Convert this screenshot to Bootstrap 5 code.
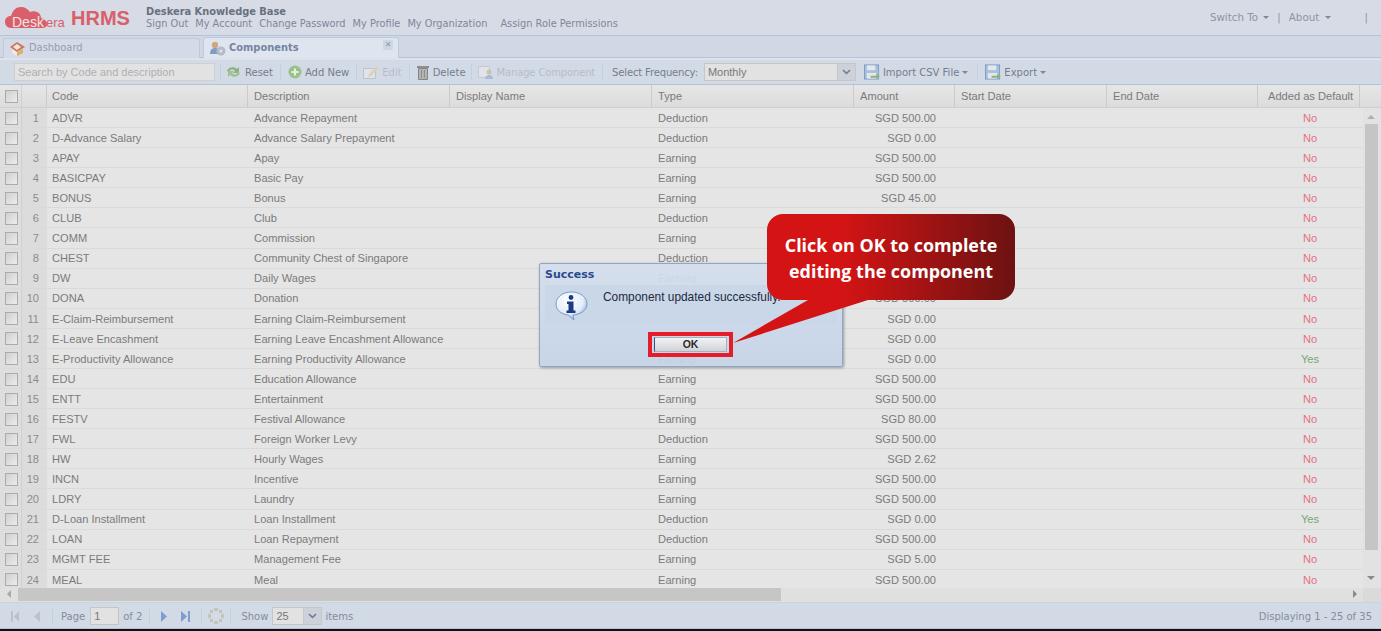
<!DOCTYPE html>
<html lang="en">

<head>
    <meta charset="UTF-8">
    <meta name="viewport" content="width=device-width, initial-scale=1.0">
    <title>Deskera HRMS - Components</title>
    <link href="https://cdn.jsdelivr.net/npm/bootstrap@5.3.0/dist/css/bootstrap.min.css" rel="stylesheet">
    <style>
        body {
            width: 1381px;
            height: 631px;
            overflow: hidden;
            background-color: #d5dbe5;
            font-family: "DejaVu Sans", sans-serif;
            font-size: 10px;
            color: #7d8598;
        }

        .app-shell {
            height: 629px;
        }

        .app-shell > * {
            flex-shrink: 0;
        }

        /* header */
        .top-head {
            height: 35px;
            padding-left: 5px;
            background-color: #d6dbe5;
        }

        .logo-box {
            width: 141px;
        }

        .logo-text {
            font-family: "Liberation Sans", sans-serif;
            font-weight: 700;
            font-size: 20px;
            color: #d9606a;
            margin-left: 2px;
        }

        .head-title {
            font-weight: 700;
            font-size: 9.85px;
            color: #69707f;
            line-height: 11px;
            margin-top: 6px;
        }

        .head-links {
            line-height: 13px;
            color: #808799;
            font-size: 9.8px;
            gap: 7px;
        }

        .head-gap {
            margin-left: 6px;
        }

        .right-links {
            color: #8d94a5;
            font-size: 10.3px;
            padding-right: 13px;
        }

        .right-end {
            margin-left: 26px;
        }

        .caret-gap {
            margin-left: 2px;
        }

        .tiny-caret {
            display: inline-block;
            border-left: 3px solid transparent;
            border-right: 3px solid transparent;
            border-top: 3px solid #7f8698;
            vertical-align: middle;
        }

        /* tabs */
        .tab-strip {
            height: 23px;
            padding: 2px 0 0 3px;
            gap: 3px;
            background-color: #d1d8e4;
            border-top: 1px solid #b3c3dc;
            border-bottom: 1px solid #b3c3dc;
        }

        .tab-item {
            width: 197px;
            height: 20px;
            padding: 0 5px;
            gap: 3px;
            border: 1px solid #bccae0;
            border-bottom: 0;
            border-radius: 3px 3px 0 0;
            background-color: #d4dbe7;
            font-size: 9.9px;
            color: #959db0;
        }

        .tab-item.tab-on {
            width: 196px;
            background-color: #dfe5ee;
            color: #7585a3;
            font-weight: 700;
            margin-top: -1px;
            height: 21px;
        }

        .tab-x {
            margin-left: auto;
            margin-top: -6px;
            width: 10px;
            height: 10px;
            border-radius: 2px;
            background-color: #cdd6e3;
            color: #8e98ab;
            font-size: 8px;
            line-height: 10px;
            text-align: center;
        }

        /* toolbar */
        .tool-bar {
            height: 27px;
            padding: 0 0 0 14px;
            background-color: #d2dae6;
            border-top: 2px solid #dde3ec;
            border-bottom: 1px solid #b3c3dc;
            color: #767d8c;
            font-size: 10px;
        }

        .tool-item {
            gap: 3px;
            white-space: nowrap;
        }

        .tool-off {
            color: #b6bdca;
        }

        .tight-text {
            letter-spacing: -0.15px;
            white-space: nowrap;
        }

        .tool-sep {
            width: 1px;
            height: 16px;
            background-color: #c2cfe1;
            margin: 0 7px;
        }

        .tool-sep.sep-first {
            margin: 0 4px 0 5px;
        }

        .tool-sep.sep-short {
            margin: 0 6px 0 7px;
        }

        .tool-sep.sep-mgr {
            margin: 0 6px 0 5px;
        }

        .tool-sep.sep-export {
            margin: 0 7px 0 9px;
        }

        .freq-label {
            margin-left: 2px;
        }

        .freq-combo {
            width: 152px;
            margin-left: 6px;
        }

        .import-item {
            margin-left: 8px;
        }

        .search-box {
            width: 201px;
            height: 18px;
            padding-left: 3px;
            background-color: #e2e2e2;
            border: 1px solid #cfcfcf;
            color: #adb0b6;
            font-family: "Liberation Sans", sans-serif;
            font-size: 11px;
            line-height: 16px;
        }

        .combo-box {
            height: 18px;
            background-color: #e2e2e2;
            border: 1px solid #c6c6c6;
            padding-left: 3px;
            font-family: "Liberation Sans", sans-serif;
            font-size: 11px;
            line-height: 16px;
            color: #787878;
        }

        .combo-arrow {
            width: 18px;
            height: 16px;
            margin-left: auto;
            background-color: #cdd2da;
            border-left: 1px solid #c6c6c6;
        }

        /* grid */
        .grid-wrap {
            height: 503px;
            background-color: #e5e5e5;
        }

        .grid-tbl {
            table-layout: fixed;
            border-collapse: separate;
            border-spacing: 0;
            width: 1363px;
            font-family: "Liberation Sans", sans-serif;
            font-size: 11.1px;
            color: #7b7b7b;
        }

        .w-chk { width: 22px; }
        .w-num { width: 25px; }
        .w-code { width: 201px; }
        .w-wide { width: 202px; }
        .w-amt { width: 101px; }
        .w-start { width: 152px; }
        .w-end { width: 151px; }
        .w-def { width: 102px; }
        .w-rest { width: 3px; }

        .grid-tbl th {
            height: 23px;
            padding: 1px 0 0 6px;
            font-weight: 400;
            color: #7a7a7a;
            background: linear-gradient(#e6e6e6, #dcdcdc);
            border-right: 1px solid #cbcbcb;
            border-bottom: 1px solid #cfcfcf;
            white-space: nowrap;
        }

        .grid-tbl th:last-child {
            border-right: 0;
        }

        .grid-tbl td {
            height: 20.09px;
            padding: 1px 0 0 6px;
            border-bottom: 1px solid #dadada;
            white-space: nowrap;
        }

        .grid-tbl .cell-code {
            padding-left: 5px;
        }

        .grid-tbl .cell-num {
            text-align: right;
            padding: 1px 8px 0 0;
            color: #8c8c8c;
            background-color: #dcdcdc;
        }

        .grid-tbl .cell-chk {
            padding: 1px 0 0 5px;
            background-color: #dedede;
            border-right: 1px solid #d0d0d0;
        }

        .grid-tbl .cell-amt {
            text-align: right;
            padding: 1px 19px 0 0;
        }

        .grid-tbl .cell-def {
            text-align: center;
            padding: 1px 0 0 2px;
        }

        .grid-tbl .head-def {
            padding-left: 10px;
        }

        .val-no {
            color: #e4717f !important;
        }

        .val-yes {
            color: #70a872 !important;
        }

        .chk-box {
            display: block;
            width: 13px;
            height: 13px;
            border: 1px solid #ababab;
            background: linear-gradient(135deg, #d0d0d0, #ececec);
        }

        .v-scroll {
            width: 18px;
            background-color: #e2e2e2;
        }

        .v-cap {
            height: 23px;
            background: linear-gradient(#e6e6e6, #dcdcdc);
            border-bottom: 1px solid #cfcfcf;
        }

        .v-thumb {
            background-color: #c5c5c5;
            width: 13px;
            height: 426px;
            margin: 16px 0 0 2px;
        }

        .h-scroll {
            height: 15px;
            background-color: #e0e0e0;
            border-bottom: 1px solid #c9d3e2;
        }

        .h-thumb {
            width: 763px;
            height: 13px;
            margin: 0 0 0 18px;
            background-color: #c6c6c6;
        }

        .h-corner {
            width: 18px;
            background-color: #dadada;
        }

        .arrow-l, .arrow-r, .arrow-u, .arrow-d {
            position: absolute;
            width: 0;
            height: 0;
        }

        .arrow-l {
            left: 7px;
            bottom: 4px;
            border-top: 4px solid transparent;
            border-bottom: 4px solid transparent;
            border-right: 4px solid #a9a9a9;
        }

        .arrow-r {
            right: 24px;
            bottom: 4px;
            border-top: 4px solid transparent;
            border-bottom: 4px solid transparent;
            border-left: 4px solid #8a8a8a;
        }

        .arrow-u {
            left: 4px;
            top: 30px;
            border-left: 4px solid transparent;
            border-right: 4px solid transparent;
            border-bottom: 4px solid #b0b0b0;
        }

        .arrow-d {
            left: 4px;
            bottom: 8px;
            border-left: 4px solid transparent;
            border-right: 4px solid transparent;
            border-top: 4px solid #8a8a8a;
        }

        /* paging */
        .page-bar {
            height: 26px;
            padding: 1px 9px 0 10px;
            background-color: #d2dae6;
            border-bottom: 1px solid #b3c3dc;
            color: #858c9c;
            font-size: 10px;
        }

        .page-sep {
            width: 1px;
            height: 15px;
            background-color: #c2cfe1;
            margin: 0 7px;
        }

        .pg-prev { margin-left: 13px; }
        .pg-last { margin-left: 12px; }
        .pg-sep-a { margin: 0 8px 0 11px; }
        .pg-sep-b { margin: 0 10px 0 7px; }
        .pg-sep-c { margin: 0 6px 0 10px; }
        .pg-sep-d { margin: 0 10px 0 6px; }
        .pg-input { width: 29px; margin-left: 5px; }
        .pg-size { width: 50px; margin-left: 4px; }
        .pg-items { margin-left: 3px; }

        /* dialog */
        .msg-box {
            position: absolute;
            left: 539px;
            top: 263px;
            width: 304px;
            height: 104px;
            background: linear-gradient(rgba(212, 222, 237, .93), rgba(197, 212, 232, .93));
            border: 1px solid #92a6c4;
            border-radius: 2px;
            box-shadow: 1px 1px 3px #9a9a9a;
            padding: 3px 5px;
        }

        .msg-title {
            font-weight: 700;
            font-size: 11px;
            color: #2a4a90;
            line-height: 15px;
        }

        .msg-body {
            height: 40px;
            margin-top: 3px;
            background-color: #c9d7e9;
        }

        .msg-icon {
            margin: 6px 0 0 10px;
        }

        .msg-text {
            font-family: "Liberation Sans", sans-serif;
            font-size: 11.9px;
            line-height: 14px;
            color: #1f2a3a;
            margin: 5px 0 0 15px;
            white-space: nowrap;
        }

        .ok-frame {
            position: absolute;
            left: 108px;
            top: 68px;
            width: 85px;
            height: 25px;
            border: 4px solid #e51c2a;
            padding: 1px 2px;
        }

        .ok-btn {
            height: 15px;
            border: 1px solid #a9b0bc;
            border-left-color: #3a4f86;
            background: linear-gradient(#f2f2f2, #cfd3da);
            font-family: "Liberation Sans", sans-serif;
            font-weight: 700;
            font-size: 10.5px;
            line-height: 13px;
            color: #2a2a2a;
            text-align: center;
        }

        /* callout */
        .tip-shape {
            position: absolute;
            left: 725px;
            top: 210px;
        }

        .tip-text {
            position: absolute;
            left: 767px;
            top: 232px;
            width: 248px;
            text-align: center;
            color: #fff;
            font-family: "Open Sans", sans-serif;
            font-weight: 700;
            font-size: 17.9px;
            line-height: 26px;
        }

        .bottom-edge {
            height: 2px;
            background-color: #111;
        }
    </style>
</head>

<body>
    <div class="app-shell d-flex flex-column">

        <!-- header -->
        <div class="top-head d-flex">
            <div class="logo-box d-flex align-items-center">
                <svg width="64" height="28" viewBox="0 0 64 28">
                    <path d="M6 24C2 24 0 21 0 17.500 0 14 3 12 6 12 8 6 11 3 16 3c4 0 7 2 9 5 2-1 5-1 7 0 3 1 4 4 4 6 3 1 6 3 6 6 0 3-2 4-5 4z" fill="#d9606a" />
                    <text x="7" y="23" font-family="Liberation Sans" font-size="14" fill="#f3e4e5">Desk</text>
                    <text x="41" y="23" font-family="Liberation Sans" font-size="13" fill="#d9606a">era</text>
                </svg>
                <span class="logo-text">HRMS</span>
            </div>
            <div>
                <div class="head-title">Deskera Knowledge Base</div>
                <div class="head-links d-flex">
                    <span>Sign Out</span>
                    <span>My Account</span>
                    <span>Change Password</span>
                    <span>My Profile</span>
                    <span>My Organization</span>
                    <span class="head-gap">Assign Role Permissions</span>
                </div>
            </div>
            <div class="right-links ms-auto d-flex align-items-center gap-2">
                <span>Switch To <i class="tiny-caret caret-gap"></i></span>
                <span>|</span>
                <span>About <i class="tiny-caret caret-gap"></i></span>
                <span class="right-end">|</span>
            </div>
        </div>

        <!-- tabs -->
        <div class="tab-strip d-flex">
            <div class="tab-item d-flex align-items-center">
                <svg width="17" height="15" viewBox="0 0 17 15">
                    <path d="M1 6l7-5 8 5-8 5z" fill="#d0765c" />
                    <path d="M4 6l4-3 4 3-4 3z" fill="#ece6dc" />
                    <path d="M3 8l5 3.500V15L3 12z" fill="#f0ece4" />
                    <path d="M8 11.500L14 8v4l-6 3z" fill="#dcae5e" />
                </svg>
                <span>Dashboard</span>
            </div>
            <div class="tab-item tab-on d-flex align-items-center">
                <svg width="17" height="15" viewBox="0 0 17 15">
                    <circle cx="6" cy="4" r="3.200" fill="#cfa684" />
                    <path d="M1 13c0-4 2-6 5-6s5 2 5 6z" fill="#7f9cc4" />
                    <circle cx="12" cy="10" r="4.500" fill="#b5bcc6" />
                    <circle cx="12" cy="10" r="1.500" fill="#dfe5ee" />
                </svg>
                <span>Components</span>
                <span class="tab-x">&#10005;</span>
            </div>
        </div>

        <!-- toolbar -->
        <div class="tool-bar d-flex align-items-center">
            <div class="search-box">Search by Code and description</div>
            <span class="tool-sep sep-first"></span>
            <div class="tool-item d-flex align-items-center">
                <svg width="17" height="14" viewBox="0 0 17 14">
                    <path d="M2 6c1-4 7-5 10-2l2-2v6H8l2-2C8 4 5 4 4 7z" fill="#8cb27e" />
                    <path d="M15 8c-1 4-7 5-10 2l-2 2V6h6L7 8c2 2 5 2 6-1z" fill="#a2c092" />
                </svg>
                <span>Reset</span>
            </div>
            <span class="tool-sep"></span>
            <div class="tool-item d-flex align-items-center">
                <svg width="14" height="14" viewBox="0 0 14 14">
                    <circle cx="7" cy="7" r="6.500" fill="#9cc08c" />
                    <path d="M7 3.500v7M3.500 7h7" stroke="#e6efe0" stroke-width="2" />
                </svg>
                <span>Add New</span>
            </div>
            <span class="tool-sep sep-short"></span>
            <div class="tool-item tool-off d-flex align-items-center">
                <svg width="16" height="14" viewBox="0 0 16 14">
                    <rect x="0.500" y="3.500" width="12" height="10" fill="#e0e3e8" stroke="#bcc3cf" />
                    <path d="M6 9l8-8 2 2-8 8-3 1z" fill="#d9d2b4" />
                </svg>
                <span>Edit</span>
            </div>
            <span class="tool-sep sep-short"></span>
            <div class="tool-item d-flex align-items-center">
                <svg width="14" height="15" viewBox="0 0 14 15">
                    <rect x="1" y="1" width="12" height="2" fill="#8d8d8d" />
                    <path d="M2.500 3.500h9v11h-9z" fill="#b3b3b3" stroke="#858585" />
                    <path d="M5.500 5v8M8.500 5v8" stroke="#8f8f8f" />
                </svg>
                <span>Delete</span>
            </div>
            <span class="tool-sep sep-mgr"></span>
            <div class="tool-item tool-off d-flex align-items-center">
                <svg width="16" height="14" viewBox="0 0 16 14">
                    <path d="M.5 1.500h11v11H.5z" fill="#e0e3e8" stroke="#c3c9d3" />
                    <circle cx="11" cy="7" r="2.500" fill="#cfbfae" />
                    <path d="M7 14c0-3 2-4 4-4s4 1 4 4z" fill="#a9bad1" />
                </svg>
                <span class="tight-text">Manage Component</span>
            </div>
            <span class="tool-sep"></span>
            <span class="tight-text freq-label">Select Frequency:</span>
            <div class="combo-box freq-combo d-flex align-items-center">
                <span>Monthly</span>
                <span class="combo-arrow d-flex align-items-center justify-content-center">
                    <svg width="9" height="6" viewBox="0 0 9 6"><path d="M1 1l3.500 3.500L8 1" fill="none" stroke="#6c7a94" stroke-width="1.500" /></svg>
                </span>
            </div>
            <div class="tool-item import-item d-flex align-items-center">
                <svg width="16" height="16" viewBox="0 0 17 16">
                    <rect x="0.500" y="0.500" width="15" height="15" fill="#a9bfdc" stroke="#7f9bc2" />
                    <rect x="3" y="1" width="9" height="5" fill="#e4e8ee" />
                    <rect x="3" y="9" width="10" height="6" fill="#e4e8ee" />
                    <path d="M7 12h6V10l4 2.500L13 15v-1H7z" fill="#8ab37c" />
                </svg>
                <span>Import CSV File</span>
                <i class="tiny-caret"></i>
            </div>
            <span class="tool-sep sep-export"></span>
            <div class="tool-item d-flex align-items-center">
                <svg width="16" height="16" viewBox="0 0 17 16">
                    <rect x="0.500" y="0.500" width="15" height="15" fill="#a9bfdc" stroke="#7f9bc2" />
                    <rect x="3" y="1" width="9" height="5" fill="#e4e8ee" />
                    <rect x="3" y="9" width="10" height="6" fill="#e4e8ee" />
                    <path d="M7 12h6V10l4 2.500L13 15v-1H7z" fill="#8ab37c" />
                </svg>
                <span>Export</span>
                <i class="tiny-caret"></i>
            </div>
        </div>

        <!-- grid -->
        <div class="grid-wrap d-flex overflow-hidden">
            <div class="flex-grow-1 overflow-hidden">
                <table class="grid-tbl">
                    <colgroup>
                        <col class="w-chk">
                        <col class="w-num">
                        <col class="w-code">
                        <col class="w-wide">
                        <col class="w-wide">
                        <col class="w-wide">
                        <col class="w-amt">
                        <col class="w-start">
                        <col class="w-end">
                        <col class="w-def">
                        <col class="w-rest">
                    </colgroup>
                    <thead>
                        <tr>
                            <th class="cell-chk"><span class="chk-box"></span></th>
                            <th></th>
                            <th class="cell-code">Code</th>
                            <th>Description</th>
                            <th>Display Name</th>
                            <th>Type</th>
                            <th>Amount</th>
                            <th>Start Date</th>
                            <th>End Date</th>
                            <th class="head-def">Added as Default</th>
                            <th></th>
                        </tr>
                    </thead>
                    <tbody id="gridRows"></tbody>
                </table>
            </div>
            <div class="v-scroll flex-shrink-0 position-relative">
                <div class="v-cap"></div>
                <span class="arrow-u"></span>
                <div class="v-thumb"></div>
                <span class="arrow-d"></span>
            </div>
        </div>

        <div class="h-scroll d-flex position-relative">
            <div class="h-thumb"></div>
            <span class="arrow-l"></span>
            <span class="arrow-r"></span>
            <div class="h-corner ms-auto"></div>
        </div>

        <!-- paging -->
        <div class="page-bar d-flex align-items-center">
            <svg width="10" height="11" viewBox="0 0 10 11"><path d="M1 0h2v11H1zM9 0v11L4 5.500z" fill="#bcc2cc" /></svg>
            <svg class="pg-prev" width="8" height="11" viewBox="0 0 8 11"><path d="M7 0v11L1 5.500z" fill="#bcc2cc" /></svg>
            <span class="page-sep pg-sep-a"></span>
            <span>Page</span>
            <div class="combo-box pg-input">1</div>
            <span class="ms-1">of 2</span>
            <span class="page-sep pg-sep-b"></span>
            <svg width="8" height="11" viewBox="0 0 8 11"><path d="M1 0v11l6-5.500z" fill="#7f9ed0" /></svg>
            <svg class="pg-last" width="11" height="11" viewBox="0 0 11 11"><path d="M1 0v11l6-5.500zM8 0h2v11H8z" fill="#7f9ed0" /></svg>
            <span class="page-sep pg-sep-c"></span>
            <svg width="16" height="16" viewBox="0 0 16 16">
                <g fill="#c4c4bc">
                    <rect x="6" y="0" width="4" height="3" /><rect x="6" y="13" width="4" height="3" />
                    <rect x="0" y="6" width="3" height="4" /><rect x="13" y="6" width="3" height="4" />
                    <rect x="2" y="2" width="3" height="3" /><rect x="11" y="2" width="3" height="3" />
                    <rect x="2" y="11" width="3" height="3" /><rect x="11" y="11" width="3" height="3" />
                </g>
            </svg>
            <span class="page-sep pg-sep-d"></span>
            <span>Show</span>
            <div class="combo-box pg-size d-flex align-items-center">
                <span>25</span>
                <span class="combo-arrow d-flex align-items-center justify-content-center">
                    <svg width="9" height="6" viewBox="0 0 9 6"><path d="M1 1l3.500 3.500L8 1" fill="none" stroke="#6c7a94" stroke-width="1.500" /></svg>
                </span>
            </div>
            <span class="pg-items">items</span>
            <span class="ms-auto">Displaying 1 - 25 of 35</span>
        </div>
    </div>
    <div class="bottom-edge"></div>

    <!-- success dialog -->
    <div class="msg-box">
        <div class="msg-title">Success</div>
        <div class="msg-body d-flex">
            <svg class="msg-icon" width="33" height="30" viewBox="0 0 33 30">
                <defs>
                    <radialGradient id="bubbleFill" cx="0.4" cy="0.3" r="0.8">
                        <stop offset="0" stop-color="#ffffff" />
                        <stop offset="0.6" stop-color="#e2edf9" />
                        <stop offset="1" stop-color="#6f93c5" />
                    </radialGradient>
                </defs>
                <path d="M16.500 1C8 1 1 6 1 13c0 6 5 10 12 11l6 5-1-5c8-.5 14-5 14-11C32 6 25 1 16.500 1z" fill="url(#bubbleFill)" stroke="#7f9bc4" />
                <circle cx="16" cy="6.500" r="2.400" fill="#1d3a86" />
                <path d="M12 10.500h6.500v9h2v2.500h-9v-2.500h2v-6.500H12z" fill="#1d3a86" />
            </svg>
            <div class="msg-text">Component updated successfully.</div>
        </div>
        <div class="ok-frame">
            <div class="ok-btn">OK</div>
        </div>
    </div>

    <!-- callout -->
    <svg class="tip-shape" width="295" height="140" viewBox="725 210 295 140">
        <defs>
            <linearGradient id="tipFill" gradientUnits="userSpaceOnUse" x1="767" y1="0" x2="1015" y2="0">
                <stop offset="0.3" stop-color="#d41414" />
                <stop offset="1" stop-color="#6c1212" />
            </linearGradient>
        </defs>
        <path d="M783 214H999a16 16 0 0 1 16 16V284a16 16 0 0 1-16 16H868L733 343 808 300H783a16 16 0 0 1-16-16V230a16 16 0 0 1 16-16z" fill="url(#tipFill)" />
    </svg>
    <div class="tip-text">Click on OK to complete<br>editing the component</div>

    <script>
        // code, description, type, amount (blank where the callout covers it), default
        const rows = [
            ['ADVR', 'Advance Repayment', 'Deduction', '500.00', 'No'],
            ['D-Advance Salary', 'Advance Salary Prepayment', 'Deduction', '0.00', 'No'],
            ['APAY', 'Apay', 'Earning', '500.00', 'No'],
            ['BASICPAY', 'Basic Pay', 'Earning', '500.00', 'No'],
            ['BONUS', 'Bonus', 'Earning', '45.00', 'No'],
            ['CLUB', 'Club', 'Deduction', '', 'No'],
            ['COMM', 'Commission', 'Earning', '', 'No'],
            ['CHEST', 'Community Chest of Singapore', 'Deduction', '', 'No'],
            ['DW', 'Daily Wages', 'Earning', '', 'No'],
            ['DONA', 'Donation', '', '500.00', 'No'],
            ['E-Claim-Reimbursement', 'Earning Claim-Reimbursement', '', '0.00', 'No'],
            ['E-Leave Encashment', 'Earning Leave Encashment Allowance', '', '0.00', 'No'],
            ['E-Productivity Allowance', 'Earning Productivity Allowance', 'Earning', '0.00', 'Yes'],
            ['EDU', 'Education Allowance', 'Earning', '500.00', 'No'],
            ['ENTT', 'Entertainment', 'Earning', '500.00', 'No'],
            ['FESTV', 'Festival Allowance', 'Earning', '80.00', 'No'],
            ['FWL', 'Foreign Worker Levy', 'Deduction', '500.00', 'No'],
            ['HW', 'Hourly Wages', 'Earning', '2.62', 'No'],
            ['INCN', 'Incentive', 'Earning', '500.00', 'No'],
            ['LDRY', 'Laundry', 'Earning', '500.00', 'No'],
            ['D-Loan Installment', 'Loan Installment', 'Deduction', '0.00', 'Yes'],
            ['LOAN', 'Loan Repayment', 'Deduction', '500.00', 'No'],
            ['MGMT FEE', 'Management Fee', 'Earning', '5.00', 'No'],
            ['MEAL', 'Meal', 'Earning', '500.00', 'No']
        ];

        document.getElementById('gridRows').innerHTML = rows.map(function (r, i) {
            const cls = r[4] === 'Yes' ? 'val-yes' : 'val-no';
            return '<tr><td class="cell-chk"><span class="chk-box"></span></td>' +
                '<td class="cell-num">' + (i + 1) + '</td>' +
                '<td class="cell-code">' + r[0] + '</td><td>' + r[1] + '</td><td></td><td>' + r[2] + '</td>' +
                '<td class="cell-amt">' + (r[3] ? 'SGD ' + r[3] : '') + '</td><td></td><td></td>' +
                '<td class="cell-def ' + cls + '">' + r[4] + '</td><td></td></tr>';
        }).join('');
    </script>
    <script src="https://cdn.jsdelivr.net/npm/bootstrap@5.3.0/dist/js/bootstrap.bundle.min.js"></script>
</body>

</html>
